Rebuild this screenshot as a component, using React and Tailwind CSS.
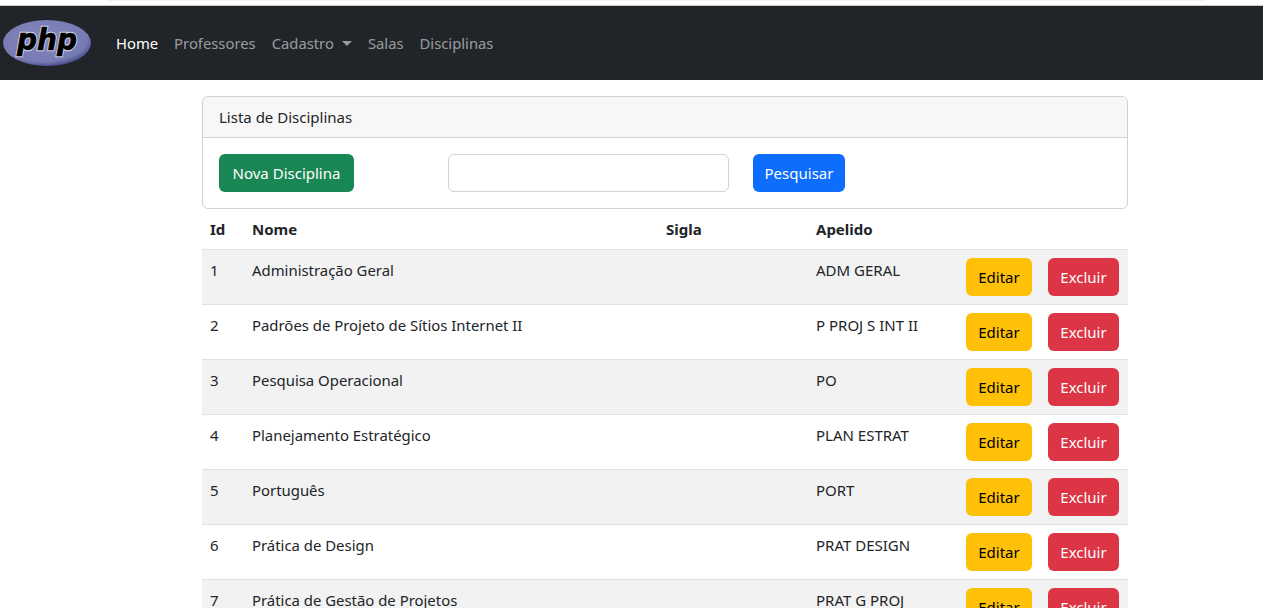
const rows = [
  ["1", "Administração Geral", "ADM GERAL"],
  ["2", "Padrões de Projeto de Sítios Internet II", "P PROJ S INT II"],
  ["3", "Pesquisa Operacional", "PO"],
  ["4", "Planejamento Estratégico", "PLAN ESTRAT"],
  ["5", "Português", "PORT"],
  ["6", "Prática de Design", "PRAT DESIGN"],
  ["7", "Prática de Gestão de Projetos", "PRAT G PROJ"],
];

function PhpLogo() {
  const t = {
    x: 14,
    y: 30,
    fontFamily: "'DejaVu Sans', sans-serif",
    fontWeight: 700,
    fontStyle: "italic",
    fontSize: 31,
    textLength: 60,
    lengthAdjust: "spacingAndGlyphs",
  };
  return (
    <svg width="88" height="46" viewBox="0 0 88 46" className="block">
      <defs>
        <radialGradient id="phpg" cx="0.45" cy="0.4" r="0.6">
          <stop offset="0" stopColor="#8487bb" />
          <stop offset="0.85" stopColor="#777bb3" />
          <stop offset="1" stopColor="#4f5390" />
        </radialGradient>
      </defs>
      <ellipse cx="44" cy="23" rx="44" ry="23" fill="url(#phpg)" />
      <text {...t} fill="#fff" stroke="#d8d9ea" strokeWidth="2.6">php</text>
      <text {...t} fill="#000" stroke="#000" strokeWidth="0.7">php</text>
    </svg>
  );
}

export default function App() {
  return (
    <div className="h-[608px] overflow-hidden bg-white text-[15px] leading-6 text-[#212529] font-['Noto_Sans','Open_Sans',sans-serif]">
      <div className="h-[6px] border-b border-[#c8c8c8]">
        <div className="ml-[107px] h-[1px] w-[1098px] bg-[#f2f2f2]" />
      </div>
      <nav className="flex h-[74px] items-center bg-[#212529] pl-[3px]">
        <PhpLogo />
        <div className="ml-[25px] flex items-center gap-4 text-[14.8px] text-[rgba(255,255,255,0.55)]">
          <span className="text-white">Home</span>
          <span>Professores</span>
          <span className="flex items-center">
            Cadastro
            <span className="ml-2 h-0 w-0 border-x-[5px] border-t-[5px] border-x-transparent border-t-current" />
          </span>
          <span>Salas</span>
          <span>Disciplinas</span>
        </div>
      </nav>

      <main className="ml-[202px] mt-4 w-[926px]">
        <section className="rounded-md border border-[#d0d1d2]">
          <div className="h-[41px] rounded-t-md border-b border-[#d0d1d2] bg-[#f7f7f7] px-4 py-2">Lista de Disciplinas</div>
          <div className="flex p-4">
            <button className="h-[38px] w-[135px] rounded-md bg-[#198754] text-white">Nova Disciplina</button>
            <input className="ml-[94px] h-[38px] w-[281px] rounded-md border border-[#ced4da] bg-white" />
            <button className="ml-6 h-[38px] w-[92px] rounded-md bg-[#0d6efd] text-white">Pesquisar</button>
          </div>
        </section>

        <table className="w-[926px] table-fixed border-collapse">
          <colgroup>
            <col className="w-[42px]" />
            <col className="w-[414px]" />
            <col className="w-[150px]" />
            <col className="w-[150px]" />
            <col className="w-[170px]" />
          </colgroup>
          <thead>
            <tr className="h-[40px] border-b border-[#dee2e6] text-left font-bold">
              <th className="px-2">Id</th>
              <th className="px-2">Nome</th>
              <th className="px-2">Sigla</th>
              <th className="px-2">Apelido</th>
              <th />
            </tr>
          </thead>
          <tbody>
            {rows.map((r, i) => (
              <tr key={r[0]} className={`h-[55px] border-b border-[#dee2e6] align-top ${i % 2 === 0 ? "bg-[#f2f2f2]" : "bg-white"}`}>
                <td className="px-2 py-2">{r[0]}</td>
                <td className="px-2 py-2 text-[14.9px]">{r[1]}</td>
                <td className="px-2 py-2" />
                <td className="px-2 py-2">{r[2]}</td>
                <td className="py-2 pr-[9px]">
                  <div className="flex justify-end gap-4">
                    <button className="h-[38px] w-[66px] rounded-md bg-[#ffc107] text-black">Editar</button>
                    <button className="h-[38px] w-[71px] rounded-md bg-[#dc3545] text-white">Excluir</button>
                  </div>
                </td>
              </tr>
            ))}
          </tbody>
        </table>
      </main>
    </div>
  );
}
